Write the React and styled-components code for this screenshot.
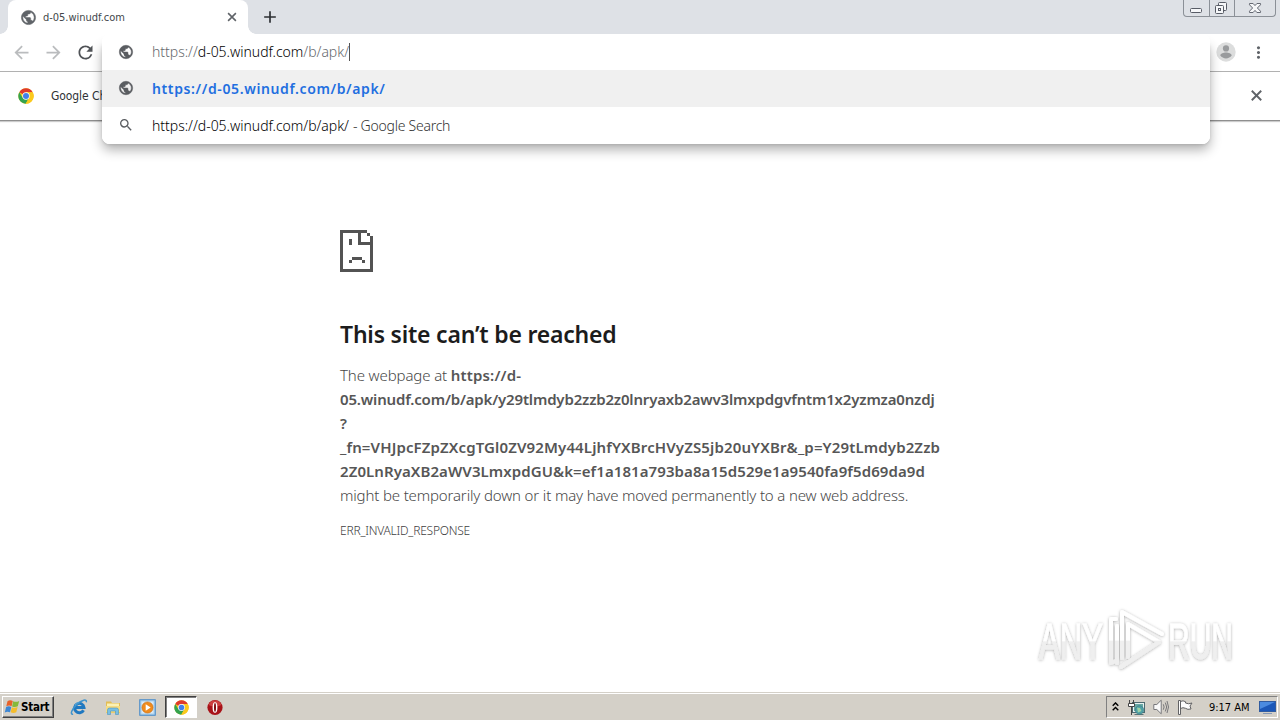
import React from "react";
import styled, { createGlobalStyle } from "styled-components";
import {
  MdAdd,
  MdArrowBack,
  MdArrowForward,
  MdRefresh,
  MdSearch,
  MdMoreVert,
} from "react-icons/md";

const Global = createGlobalStyle`
  * { box-sizing: border-box; }
  body { margin: 0; overflow: hidden; background: #fff; }
  svg { display: block; flex: none; }
`;

const Screen = styled.div`
  position: relative;
  width: 1280px;
  height: 720px;
  display: flex;
  flex-direction: column;
  overflow: hidden;
  background: #fff;
  font-family: "Noto Sans", sans-serif;
  white-space: nowrap;
`;

const TabStrip = styled.div`
  height: 34px;
  flex: none;
  display: flex;
  padding-left: 8px;
  background: #dee1e6;
`;

const Tab = styled.div`
  position: relative;
  width: 240px;
  height: 34px;
  display: flex;
  align-items: center;
  padding: 0 9px 0 12px;
  background: #fff;
  border-radius: 8px 8px 0 0;
  color: #5f6368;
  &::before,
  &::after {
    content: "";
    position: absolute;
    bottom: 0;
    width: 8px;
    height: 8px;
  }
  &::before {
    left: -8px;
    background: radial-gradient(circle at 0 0, transparent 7.5px, #fff 8px);
  }
  &::after {
    right: -8px;
    background: radial-gradient(circle at 100% 0, transparent 7.5px, #fff 8px);
  }
`;

const TabTitle = styled.span`
  flex: 1;
  margin-left: 6px;
  font: 400 11px "DejaVu Sans Condensed", sans-serif;
  letter-spacing: -0.02px;
  color: #44474b;
`;

const NewTab = styled.div`
  display: flex;
  align-items: center;
  margin-left: 12px;
  color: #2c2f33;
`;

const Captions = styled.div`
  display: flex;
  height: 17px;
  margin-left: auto;
  margin-right: 4px;
  border: 1px solid #8b9097;
  border-top: 0;
  border-radius: 0 0 4px 4px;
`;

const Caption = styled.div`
  width: ${(p) => p.$w}px;
  display: flex;
  justify-content: center;
  border-left: ${(p) => (p.$first ? "0" : "1px solid #8b9097")};
`;

const Toolbar = styled.div`
  height: 38px;
  flex: none;
  display: flex;
  align-items: center;
  justify-content: space-between;
  padding: 0 12px 1px 11px;
  border-bottom: 1px solid #b1b1b1;
  background: #fff;
`;

const NavGroup = styled.div`
  display: flex;
  align-items: center;
  gap: ${(p) => p.$gap}px;
  color: #5f6368;
`;

const NavButton = styled.span`
  display: flex;
  color: ${(p) => (p.$off ? "#babcbe" : "#505357")};
`;

const InfoBar = styled.div`
  height: 49px;
  flex: none;
  display: flex;
  align-items: center;
  padding: 0 15px 1px 18px;
  border-bottom: 1px solid #8f8f8f;
  box-shadow: 0 1px 1px rgba(0, 0, 0, 0.2);
  color: #5f6368;
`;

const InfoText = styled.span`
  flex: 1;
  margin-left: 17px;
  font: 400 12px "DejaVu Sans Condensed", sans-serif;
  letter-spacing: -0.08px;
  color: #303336;
`;

const Popup = styled.div`
  position: absolute;
  left: 102px;
  top: 34px;
  width: 1108px;
  height: 110px;
  overflow: hidden;
  background: #fff;
  border-radius: 8px;
`;

const PopupShadow = styled.div`
  position: absolute;
  left: 102px;
  top: 40px;
  width: 1108px;
  height: 104px;
  border-radius: 8px;
  box-shadow: 0 6px 12px rgba(0, 0, 0, 0.3), 0 1px 3px rgba(0, 0, 0, 0.1);
`;

const Suggestion = styled.div`
  height: ${(p) => p.$h}px;
  display: flex;
  align-items: center;
  padding: 0 0 1px 16px;
  background: ${(p) => (p.$active ? "#f0f0f0" : "#fff")};
  color: #5a5d61;
`;

const Url = styled.span`
  margin-left: 18px;
  padding-top: ${(p) => (p.$muted ? 0 : 2)}px;
  font-size: 14px;
  line-height: 20px;
  font-weight: ${(p) => (p.$match ? 600 : 300)};
  letter-spacing: ${(p) => (p.$match ? 0.62 : -0.02)}px;
  color: ${(p) => (p.$match ? "#1f6fe0" : p.$muted ? "#66696d" : "#000")};
`;

const Host = styled.span`
  color: #000;
`;

const Caret = styled.span`
  width: 1px;
  height: 18px;
  background: #555;
`;

const Engine = styled.span`
  margin-left: 4px;
  padding-top: 2px;
  font-size: 14px;
  line-height: 20px;
  font-weight: 300;
  letter-spacing: -0.25px;
  color: #333;
`;

const Page = styled.main`
  flex: 1;
  width: 600px;
  margin: 0 auto;
  padding-top: 109px;
  color: #545454;
`;

const Title = styled.h1`
  margin: 45px 0 0;
  font-size: 23px;
  line-height: 34px;
  font-weight: 600;
  letter-spacing: -0.21px;
  color: #1c1c1c;
`;

const Message = styled.p`
  margin: 12px 0 0;
  font-size: 15px;
  line-height: 24px;
  font-weight: 300;
  color: #484848;
`;

const Line = styled.span`
  display: block;
  letter-spacing: ${(p) => p.$track || 0}px;
`;

const Strong = styled.b`
  font-weight: 600;
  letter-spacing: ${(p) => p.$track || 0}px;
  color: #565656;
`;

const ErrorCode = styled.div`
  margin-top: 14px;
  font-size: 12px;
  line-height: 19px;
  font-weight: 300;
  letter-spacing: -0.22px;
  color: #404040;
`;

const Watermark = styled.div`
  position: absolute;
  left: 1028px;
  top: 600px;
`;

const Taskbar = styled.div`
  height: 28px;
  flex: none;
  display: flex;
  align-items: center;
  padding: 1px 2px 0;
  background: #d4d0c8;
  border-top: 1px solid #d4d0c8;
  box-shadow: inset 0 1px 0 #fff;
`;

const StartButton = styled.div`
  width: 52px;
  height: 22px;
  display: flex;
  align-items: center;
  padding-left: 1px;
  border: 1px solid;
  border-color: #fff #404040 #404040 #fff;
  box-shadow: inset -1px -1px 0 #808080;
  font: 700 11.5px "DejaVu Sans Condensed", sans-serif;
  letter-spacing: -0.25px;
  color: #000;
`;

const QuickLaunch = styled.div`
  display: flex;
  align-items: center;
  margin-left: 8px;
`;

const TaskIcon = styled.div`
  width: 34px;
  height: 22px;
  display: flex;
  align-items: center;
  justify-content: center;
`;

const ActiveTask = styled(TaskIcon)`
  width: 32px;
  margin: 0 1px;
  background: #fff;
  border: 1px solid;
  border-color: #404040 #fff #fff #404040;
  box-shadow: inset 1px 1px 0 #808080;
`;

const Tray = styled.div`
  width: 172px;
  height: 22px;
  margin-left: auto;
  display: flex;
  align-items: center;
  padding: 0 1px 0 5px;
  border: 1px solid;
  border-color: #808080 #fff #fff #808080;
`;

const TrayIcons = styled.div`
  display: flex;
  align-items: center;
  gap: 8px;
`;

const Clock = styled.span`
  margin-left: 16px;
  margin-right: auto;
  font: 400 11px "DejaVu Sans Condensed", sans-serif;
  letter-spacing: -0.02px;
  color: #000;
`;

const GlobeIcon = ({ size }) => (
  <svg width={size} height={size} viewBox="0 0 24 24" fill="currentColor" stroke="currentColor" strokeWidth="0.7">
    <path d="M12 2C6.48 2 2 6.48 2 12s4.48 10 10 10 10-4.48 10-10S17.52 2 12 2zm-1 17.93c-3.95-.49-7-3.85-7-7.93 0-.62.08-1.21.21-1.79L9 15v1c0 1.1.9 2 2 2v1.93zm6.9-2.54c-.26-.81-1-1.39-1.9-1.39h-1v-3c0-.55-.45-1-1-1H8v-2h2c.55 0 1-.45 1-1V7h2c1.1 0 2-.9 2-2v-.41c2.93 1.19 5 4.06 5 7.41 0 2.08-.8 3.97-2.1 5.39z" />
  </svg>
);

const BoldClose = ({ size }) => (
  <svg width={size} height={size} viewBox="0 0 18 18" fill="none" stroke="currentColor" strokeWidth="2">
    <path d="M4 4l10 10M14 4 4 14" />
  </svg>
);

const ChromeLogo = ({ size }) => (
  <svg width={size} height={size} viewBox="0 0 48 48">
    <circle cx="24" cy="24" r="23" fill="#fbc91d" />
    <path d="M24 24 4 12.5A23 23 0 0 1 44 12.5H24z" fill="#df3a2c" />
    <path d="M4 12.5A23 23 0 0 0 23 47L33.5 29.5 24 24 14 29.5z" fill="#34a34f" />
    <path d="M44 12.5H24v11.5l9.5 5.5L23 47A23 23 0 0 0 44 12.5z" fill="#fbc91d" />
    <circle cx="24" cy="24" r="11" fill="#fff" />
    <circle cx="24" cy="24" r="9" fill="#4280ea" />
  </svg>
);

const Avatar = () => (
  <svg width="20" height="20" viewBox="0 0 20 20">
    <circle cx="10" cy="10" r="9.7" fill="#dcdddd" />
    <circle cx="10" cy="6.4" r="3.1" fill="#999b9d" />
    <path d="M4.3 13.6c0-2.2 3.2-3.1 5.7-3.1s5.7.9 5.7 3.1c-1.3 1.9-3.4 2.8-5.7 2.8s-4.4-.9-5.7-2.8z" fill="#999b9d" />
  </svg>
);

const SadPage = () => (
  <svg width="33" height="42" viewBox="0 0 33 42" shapeRendering="crispEdges" fill="#535353">
    <path d="M0 0h27v3h-6v9h12v30H0zM3 3v36h27V15H18V3z" fillRule="evenodd" />
    <path d="M27 3h3v3h-3zM30 6h3v9h-3zM9 9h3v6H9zM12 27h10v3H12zM9 30h3v3H9zM22 30h3v3h-3z" />
  </svg>
);

const MinimizeIcon = () => (
  <svg width="24" height="16" viewBox="0 0 24 16">
    <rect x="5.5" y="8.5" width="11" height="4" rx="1" fill="#f6f7f9" stroke="#585c66" />
  </svg>
);

const RestoreIcon = () => (
  <svg width="24" height="16" viewBox="0 0 24 16" fill="#f6f7f9" stroke="#585c66">
    <rect x="8.5" y="2.5" width="8" height="8" rx="1" />
    <rect x="5.5" y="5.5" width="8" height="8" rx="1" />
    <rect x="8.5" y="8.5" width="2" height="2" />
  </svg>
);

const CloseIcon = () => (
  <svg width="24" height="16" viewBox="0 0 24 16">
    <path
      d="M6.5 3.5h3.6L12 5.6l1.9-2.1h3.6v1.3L14.4 8l3.1 3.2v1.3h-3.6L12 10.4l-1.9 2.1H6.5v-1.3L9.6 8 6.5 4.8z"
      fill="#f6f7f9"
      stroke="#646872"
    />
  </svg>
);

const WindowsFlag = () => (
  <svg width="17" height="16" viewBox="0 0 17 16">
    <path d="M3.5 2.2C5.3 1 7 1.1 8.8 2L7.6 7.2C5.9 6.4 4.2 6.4 2.3 7.3z" fill="#e8622a" />
    <path d="M9.2 2.2c1.9.9 3.7.9 6-.2l-1.4 5.3c-2 1-3.8 1-5.7.1z" fill="#86b93a" />
    <path d="M2.1 7.9c1.8-.9 3.6-.8 5.2 0L6 13.3c-1.7-.8-3.4-.8-5.2.1z" fill="#3d87d4" />
    <path d="M7.9 8.2c1.9.9 3.7.8 5.7-.1l-1.3 5.2c-2 1-3.9.9-5.7 0z" fill="#f5bd2c" />
  </svg>
);

const ExplorerE = () => (
  <svg width="18" height="18" viewBox="0 0 18 18" fill="none">
    <path d="M13.5 12.2A4.7 4.7 0 1 1 14 9.6H5.5" stroke="#1f78c0" strokeWidth="3" />
    <path d="M5 8.3c.8-2.5 2.5-3.7 4.6-3.7" stroke="#8fd3f4" strokeWidth="1" />
    <path d="M3.1 16.3C-.5 16.8 2 11 6.8 6.5S17.3.4 16.3 4.3" stroke="#3d93cd" strokeWidth="1.5" />
  </svg>
);

const FolderIcon = () => (
  <svg width="18" height="18" viewBox="0 0 18 18">
    <path d="M2 3.5h5l1 1.5h8v10H2z" fill="#e3bd55" />
    <path d="M3 5.5h12V13H3z" fill="#fbf1b4" />
    <path d="M2 8h14v6.5H2z" fill="#f5dc83" />
    <path d="M3.5 16.5V12q0-2 2-2h7q2 0 2 2v4.5h-3V13h-5v3.5z" fill="#78bfe4" stroke="#4b94bd" strokeWidth=".6" />
  </svg>
);

const MediaIcon = () => (
  <svg width="17" height="17" viewBox="0 0 17 17">
    <rect x=".75" y=".75" width="15.5" height="15.5" fill="#a9cfec" stroke="#4688c7" />
    <rect x="2.5" y="2.5" width="12" height="12" fill="#d9e9f5" />
    <circle cx="8.5" cy="8.5" r="5.6" fill="#ef8b1d" stroke="#c66b10" strokeWidth=".6" />
    <path d="M6.7 5.2v6.6l5-3.3z" fill="#fff" />
  </svg>
);

const OperaIcon = () => (
  <svg width="17" height="17" viewBox="0 0 17 17">
    <circle cx="8" cy="8.5" r="7.6" fill="#a81218" />
    <path d="M1.5 6a7 7 0 0 1 13 0q-6.5 3-13 0z" fill="#cc3f3f" />
    <ellipse cx="8" cy="8.5" rx="2.4" ry="5.3" fill="#fff" />
    <ellipse cx="8" cy="8.5" rx="1" ry="4.4" fill="#7e0d10" />
  </svg>
);

const ChevronsUp = () => (
  <svg width="7" height="10" viewBox="0 0 7 10" fill="none" stroke="#000" strokeWidth="1.4">
    <path d="M.7 3.7 3.5.9l2.8 2.8M.7 8.2l2.8-2.8 2.8 2.8" />
  </svg>
);

const NetworkIcon = () => (
  <svg width="18" height="17" viewBox="-1 0 18 17">
    <rect x="4.5" y="3.5" width="12" height="10" fill="#e7f1ef" stroke="#4d6a70" />
    <rect x="6" y="5" width="9" height="7" fill="#68a9a5" />
    <path d="M6.5 15.5h9" stroke="#5e7477" />
    <circle cx="11.5" cy="11" r="4.3" fill="#4f9fa4" stroke="#39777f" strokeWidth=".6" />
    <path d="M9 8.5l3 .5 1.5 3-3.5 1.5z" fill="#9fd2a5" />
    <path d="M1.5 1v3M5.5 1v3M.5 4.5h6v3h-6zM3.5 8v8" fill="#fff" stroke="#464646" />
  </svg>
);

const SpeakerIcon = () => (
  <svg width="16" height="16" viewBox="0 0 16 16" fill="none" stroke="#77777a">
    <path d="M.8 5.5h3L8.2 1.2v13.6L3.8 10.5h-3z" fill="#fafafa" />
    <path d="M10.3 5.3q1.6 2.7 0 5.4M12.3 3.6q2.8 4.4 0 8.8M14 2q3 6 0 12" />
  </svg>
);

const FlagIcon = () => (
  <svg width="16" height="16" viewBox="0 0 16 16" fill="#fcfcfc" stroke="#626264">
    <path d="M3.5 2.5Q6 1 8.5 2.7V4q3 1.5 6.5 0l-2 3 1 3q-3.5 1-5.5-.7Q6 8 3.5 9.5z" />
    <path d="M1.5 1.5h2v14h-2z" />
  </svg>
);

const DesktopIcon = () => (
  <svg width="17" height="15" viewBox="0 0 17 15">
    <rect x=".5" y="1.5" width="16" height="10" fill="#1c58b8" stroke="#315ca0" />
    <path d="M1 2h15L1 9z" fill="#4b8be0" />
    <path d="M4 13.5h9" stroke="#8598b5" />
  </svg>
);

const AnyRunMark = () => (
  <svg width="250" height="84" viewBox="0 0 250 84">
    <defs>
      <linearGradient id="fade" gradientUnits="userSpaceOnUse" x1="0" y1="8" x2="0" y2="72">
        <stop offset="0.5" stopColor="#fff" />
        <stop offset="0.52" stopColor="#efefef" />
      </linearGradient>
      <linearGradient id="letters" gradientUnits="userSpaceOnUse" x1="0" y1="22" x2="0" y2="60">
        <stop offset="0.5" stopColor="#fff" />
        <stop offset="0.52" stopColor="#efefef" />
      </linearGradient>
      <filter id="halo" x="-10%" y="-20%" width="120%" height="140%">
        <feDropShadow dx="0" dy="0.5" stdDeviation="1.5" floodColor="#000" floodOpacity="0.34" />
      </filter>
    </defs>
    <g filter="url(#halo)">
      <g
        fill="url(#letters)"
        stroke="url(#letters)"
        strokeWidth="0.8"
        fontFamily="Liberation Sans, sans-serif"
        fontSize="50"
      >
        <text x="11" y="58.5" textLength="64" lengthAdjust="spacingAndGlyphs">ANY</text>
        <text x="140" y="58.5" textLength="65" lengthAdjust="spacingAndGlyphs">RUN</text>
      </g>
      <g fill="none" stroke="url(#fade)" strokeWidth="4" strokeLinejoin="round" strokeLinecap="round">
        <path d="M94 58V12l40 22" />
        <path d="M88 19h-5v44l5-2" />
        <path d="M89 63V26M100 57V24l31 18-38 25" />
      </g>
    </g>
  </svg>
);

export default function App() {
  return (
    <Screen>
      <Global />
      <TabStrip>
        <Tab>
          <GlobeIcon size={17} />
          <TabTitle>d-05.winudf.com</TabTitle>
          <BoldClose size={14} />
        </Tab>
        <NewTab>
          <MdAdd size={20} />
        </NewTab>
        <Captions>
          <Caption $w={25} $first><MinimizeIcon /></Caption>
          <Caption $w={25}><RestoreIcon /></Caption>
          <Caption $w={41}><CloseIcon /></Caption>
        </Captions>
      </TabStrip>

      <Toolbar>
        <NavGroup $gap={11}>
          <NavButton $off><MdArrowBack size={21} /></NavButton>
          <NavButton $off><MdArrowForward size={21} /></NavButton>
          <NavButton><MdRefresh size={21} /></NavButton>
        </NavGroup>
        <NavGroup $gap={13}>
          <Avatar />
          <MdMoreVert size={19} />
        </NavGroup>
      </Toolbar>

      <InfoBar>
        <ChromeLogo size={16} />
        <InfoText>Google Ch</InfoText>
        <BoldClose size={17} />
      </InfoBar>

      <Page>
        <SadPage />
        <Title>This site can’t be reached</Title>
        <Message>
          <Line $track={-0.12}>
            The webpage at <Strong $track={0.15}>https://d-</Strong>
          </Line>
          <Line><Strong $track={-0.17}>05.winudf.com/b/apk/y29tlmdyb2zzb2z0lnryaxb2awv3lmxpdgvfntm1x2yzmza0nzdj</Strong></Line>
          <Line><Strong>?</Strong></Line>
          <Line><Strong $track={0.13}>_fn=VHJpcFZpZXcgTGl0ZV92My44LjhfYXBrcHVyZS5jb20uYXBr&amp;_p=Y29tLmdyb2Zzb</Strong></Line>
          <Line><Strong $track={0.08}>2Z0LnRyaXB2aWV3LmxpdGU&amp;k=ef1a181a793ba8a15d529e1a9540fa9f5d69da9d</Strong></Line>
          <Line $track={-0.15}>might be temporarily down or it may have moved permanently to a new web address.</Line>
        </Message>
        <ErrorCode>ERR_INVALID_RESPONSE</ErrorCode>
      </Page>

      <Taskbar>
        <StartButton>
          <WindowsFlag />
          Start
        </StartButton>
        <QuickLaunch>
          <TaskIcon><ExplorerE /></TaskIcon>
          <TaskIcon><FolderIcon /></TaskIcon>
          <TaskIcon><MediaIcon /></TaskIcon>
          <ActiveTask><ChromeLogo size={15} /></ActiveTask>
          <TaskIcon><OperaIcon /></TaskIcon>
        </QuickLaunch>
        <Tray>
          <TrayIcons>
            <ChevronsUp />
            <NetworkIcon />
            <SpeakerIcon />
            <FlagIcon />
          </TrayIcons>
          <Clock>9:17 AM</Clock>
          <DesktopIcon />
        </Tray>
      </Taskbar>

      <PopupShadow />
      <Popup>
        <Suggestion $h={36}>
          <GlobeIcon size={16} />
          <Url $muted>
            https://<Host>d-05.winudf.com</Host>/b/apk/
          </Url>
          <Caret />
        </Suggestion>
        <Suggestion $h={37} $active>
          <GlobeIcon size={16} />
          <Url $match>https://d-05.winudf.com/b/apk/</Url>
        </Suggestion>
        <Suggestion $h={37}>
          <MdSearch size={16} />
          <Url>https://d-05.winudf.com/b/apk/</Url>
          <Engine>- Google Search</Engine>
        </Suggestion>
      </Popup>
      <Watermark>
        <AnyRunMark />
      </Watermark>
    </Screen>
  );
}
